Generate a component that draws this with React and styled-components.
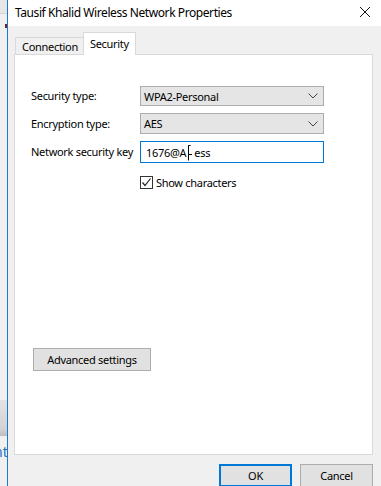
import styled, { createGlobalStyle } from 'styled-components';

const GlobalStyle = createGlobalStyle`
  html, body {
    margin: 0;
    padding: 0;
    width: 381px;
    height: 486px;
    overflow: hidden;
    background: #f0f0f0;
  }
  * { box-sizing: border-box; }
`;

const uiFont = `"Segoe UI", "Noto Sans", "Liberation Sans", sans-serif`;

const Screen = styled.div`
  display: flex;
  width: 381px;
  height: 486px;
  overflow: hidden;
  font-family: ${uiFont};
  font-size: 11px;
  letter-spacing: -0.3px;
  white-space: nowrap;
  color: #000;
`;

// the window that sits behind the dialog, only a sliver is visible
const BehindWindow = styled.div`
  width: 7px;
  flex: none;
  display: flex;
  flex-direction: column;
  background: #f0f0f0;
  overflow: hidden;
`;

const BehindTop = styled.div`
  height: 14px;
  background: #e6e6e6;
  border-bottom: 1px solid #d6d6d6;
`;

const BehindMark = styled.div`
  width: 2px;
  height: 4px;
  margin: 10px 0 0 5px;
  background: #7a1f1f;
`;

const BehindBar = styled.div`
  margin-top: 372px;
  height: 36px;
  background: linear-gradient(#e2e2e2, #d2d2d2 80%, #bdbdbd);
`;

const BehindLink = styled.div`
  margin-top: 8px;
  margin-left: -6px;
  font-size: 14px;
  letter-spacing: 0;
  color: #1e6fc4;
  line-height: 16px;
`;

const Dialog = styled.div`
  flex: 1;
  display: flex;
  flex-direction: column;
  border-left: 1px solid #1a78d4;
  background: #f0f0f0;
`;

const TitleBar = styled.div`
  height: 26px;
  flex: none;
  display: flex;
  align-items: center;
  justify-content: space-between;
  background: #fff;
  padding: 0 10px 2px 7px;
`;

const Title = styled.span`
  font-size: 12px;
  letter-spacing: -0.42px;
  line-height: 14px;
  padding-top: 1px;
`;

const CloseButton = styled.span`
  display: flex;
  width: 12px;
  height: 12px;
`;

const Body = styled.div`
  flex: 1;
  display: flex;
  flex-direction: column;
  padding: 7px 0 0 6px;
`;

const TabStrip = styled.div`
  display: flex;
  align-items: flex-end;
  padding-left: 1px;
  height: 22px;
  position: relative;
  z-index: 1;
`;

const Tab = styled.div`
  height: ${p => (p.$active ? '23px' : '18px')};
  padding: ${p => (p.$active ? '3px 6px 0 6px' : '1px 5px 0 6px')};
  background: ${p => (p.$active ? '#fff' : '#f0f0f0')};
  border: 1px solid #d9d9d9;
  border-bottom: ${p => (p.$active ? 'none' : '1px solid #d9d9d9')};
  margin-left: ${p => (p.$active ? '-1px' : '0')};
  line-height: 15px;
`;

const Panel = styled.div`
  width: 359px;
  height: 401px;
  margin-top: -1px;
  background: #fff;
  border: 1px solid #d9d9d9;
  padding: 31px 0 0 16px;
  display: flex;
  flex-direction: column;
`;

const Form = styled.div`
  display: grid;
  grid-template-columns: 109px 184px;
  grid-template-rows: 20px 21px 22px;
  row-gap: 7px;
  align-items: center;
`;

const Label = styled.label`
  line-height: 16px;
`;

const Select = styled.div`
  height: 100%;
  display: flex;
  align-items: center;
  justify-content: space-between;
  padding: 0 5px 0 3px;
  background: #e5e5e5;
  border: 1px solid #adadad;
`;

const TextInput = styled.div`
  height: 100%;
  display: flex;
  align-items: center;
  padding: 0 5px;
  background: #fff;
  border: 1px solid #0078d7;
`;

const Caret = styled.span`
  display: inline-flex;
  justify-content: center;
  width: 8px;
  height: 16px;
  margin-top: 1px;
`;

const CheckRow = styled.div`
  display: flex;
  align-items: center;
  gap: 3px;
  margin: 12px 0 0 109px;
`;

const CheckBox = styled.span`
  width: 13px;
  height: 13px;
  display: flex;
  align-items: center;
  justify-content: center;
  border: 1px solid #333;
  background: #fff;
`;

const Button = styled.div`
  display: flex;
  align-items: center;
  justify-content: center;
  height: ${p => p.$h || 23}px;
  width: ${p => p.$w}px;
  background: #e1e1e1;
  border: ${p => (p.$primary ? '2px solid #0078d7' : '1px solid #adadad')};
`;

const AdvancedRow = styled.div`
  margin: 158px 0 0 2px;
`;

const Footer = styled.div`
  display: flex;
  justify-content: flex-end;
  gap: 8px;
  width: 359px;
  margin-top: 9px;
`;

const Chevron = () => (
  <svg width="10" height="6" viewBox="0 0 10 6">
    <path d="M0.5 0.5 L5 5 L9.5 0.5" fill="none" stroke="#444" strokeWidth="1" />
  </svg>
);

const Combo = ({ value }) => (
  <Select>
    <span>{value}</span>
    <Chevron />
  </Select>
);

export default function App() {
  return (
    <>
      <GlobalStyle />
      <Screen>
        <BehindWindow>
          <BehindTop />
          <BehindMark />
          <BehindBar />
          <BehindLink>nt</BehindLink>
        </BehindWindow>
        <Dialog>
          <TitleBar>
            <Title>Tausif Khalid Wireless Network Properties</Title>
            <CloseButton>
              <svg width="12" height="12" viewBox="0 0 12 12">
                <path d="M1 1 L11 11 M11 1 L1 11" stroke="#111" strokeWidth="1" />
              </svg>
            </CloseButton>
          </TitleBar>
          <Body>
            <TabStrip>
              <Tab>Connection</Tab>
              <Tab $active>Security</Tab>
            </TabStrip>
            <Panel>
              <Form>
                <Label>Security type:</Label>
                <Combo value="WPA2-Personal" />
                <Label>Encryption type:</Label>
                <Combo value="AES" />
                <Label>Network security key</Label>
                <TextInput>
                  <span>1676@A</span>
                  <Caret>
                    <svg width="6" height="16" viewBox="0 0 6 16">
                      <path d="M1.5 0.5 V15.5 M1.5 0.5 H3.5 M1.5 9.5 H5" fill="none" stroke="#000" strokeWidth="1" />
                    </svg>
                  </Caret>
                  <span>ess</span>
                </TextInput>
              </Form>
              <CheckRow>
                <CheckBox>
                  <svg width="11" height="11" viewBox="0 0 11 11">
                    <path d="M1.5 5.5 L4 8.5 L9.5 1.5" fill="none" stroke="#222" strokeWidth="1.2" />
                  </svg>
                </CheckBox>
                <span>Show characters</span>
              </CheckRow>
              <AdvancedRow>
                <Button $w={118} $h={23}>Advanced settings</Button>
              </AdvancedRow>
            </Panel>
            <Footer>
              <Button $w={73} $primary>OK</Button>
              <Button $w={73}>Cancel</Button>
            </Footer>
          </Body>
        </Dialog>
      </Screen>
    </>
  );
}
